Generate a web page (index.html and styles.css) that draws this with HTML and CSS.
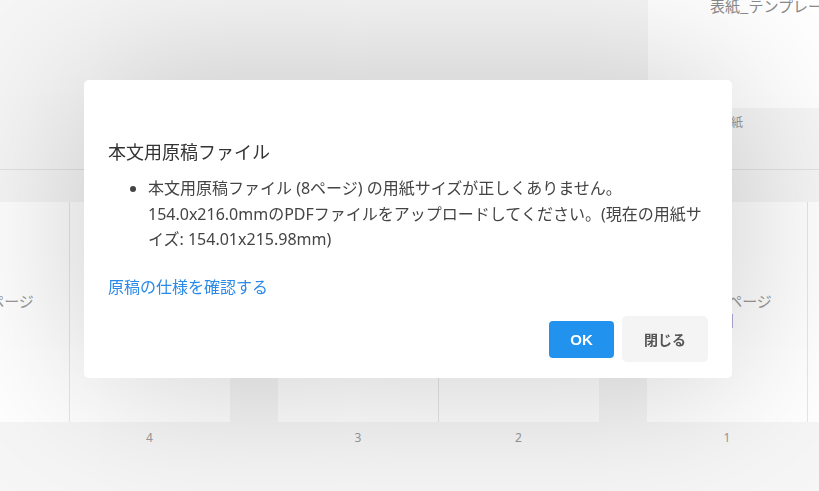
FILE: index.html
```html
<!DOCTYPE html>
<html lang="ja">
<head>
<meta charset="utf-8">
<title>原稿ファイル</title>
<link rel="stylesheet" href="styles.css">
</head>
<body>
<div class="page">
  <header class="top">
    <div class="cover">
      <div class="cover-thumb"><span class="cover-title">表紙_テンプレート.pdf</span></div>
      <div class="cover-label">表紙</div>
    </div>
  </header>
  <section class="spreads">
    <div class="spread">
      <div class="page-col">
        <div class="sheet"><span class="sheet-text">本文のページ</span><span class="sheet-mark"></span></div>
        <div class="num">5</div>
      </div>
      <div class="page-col">
        <div class="sheet sheet-right"><span class="sheet-text">本文のページ</span><span class="sheet-mark"></span></div>
        <div class="num">4</div>
      </div>
    </div>
    <div class="spread">
      <div class="page-col">
        <div class="sheet"><span class="sheet-text">本文のページ</span><span class="sheet-mark"></span></div>
        <div class="num">3</div>
      </div>
      <div class="page-col">
        <div class="sheet sheet-right"><span class="sheet-text">本文のページ</span><span class="sheet-mark"></span></div>
        <div class="num">2</div>
      </div>
    </div>
    <div class="spread">
      <div class="page-col">
        <div class="sheet"><span class="sheet-text">本文のページ</span><span class="sheet-mark"></span></div>
        <div class="num">1</div>
      </div>
      <div class="page-col">
        <div class="sheet sheet-right"></div>
        <div class="num">表紙裏</div>
      </div>
    </div>
  </section>
</div>

<div class="modal" role="dialog">
  <h2 class="modal-title">本文用原稿ファイル</h2>
  <ul class="modal-list">
    <li>本文用原稿ファイル (8ページ) の用紙サイズが正しくありません。154.0x216.0mmのPDFファイルをアップロードしてください。(現在の用紙サイズ: 154.01x215.98mm)</li>
  </ul>
  <a class="modal-link" href="#">原稿の仕様を確認する</a>
  <div class="modal-actions">
    <button class="btn btn-ok" type="button">OK</button>
    <button class="btn btn-close" type="button">閉じる</button>
  </div>
</div>
</body>
</html>
```

FILE: styles.css
```css
html, body {
  margin: 0;
  padding: 0;
}

body {
  width: 819px;
  height: 491px;
  overflow: hidden;
  background: #f6f6f6;
  font-family: "Noto Sans", "Noto Sans CJK JP", sans-serif;
  color: #444;
}

.page {
  width: 819px;
}

.top {
  height: 169px;
  border-bottom: 1px solid #e2e2e2;
  display: flex;
  justify-content: flex-end;
}

.cover {
  width: 171px;
  display: flex;
  flex-direction: column;
}

.cover-thumb {
  height: 108px;
  background: #ffffff;
  padding-left: 62px;
  white-space: nowrap;
  overflow: hidden;
}

.cover-title {
  display: block;
  font-size: 15px;
  line-height: 12px;
  color: #8a8a8a;
  font-family: "Noto Sans CJK JP", sans-serif;
}

.cover-label {
  margin-top: 5px;
  padding-left: 71px;
  font-size: 12px;
  line-height: 18px;
  color: #999;
  font-family: "Noto Sans CJK JP", sans-serif;
}

.spreads {
  margin-top: 32px;
  margin-left: -91px;
  display: flex;
  gap: 48px;
}

.spread {
  display: flex;
}

.page-col {
  display: flex;
  flex-direction: column;
  align-items: center;
}

.sheet {
  width: 160px;
  height: 220px;
  background: #ffffff;
  display: flex;
  flex-direction: column;
  align-items: center;
  justify-content: center;
  gap: 1px;
  padding-bottom: 8px;
  box-sizing: border-box;
}

.sheet-right {
  width: 161px;
  border-left: 1px solid #e6e6e6;
}

.sheet-text {
  font-family: "Noto Sans CJK JP", sans-serif;
  font-size: 15px;
  line-height: 24px;
  color: #9a9a9a;
  white-space: nowrap;
}

.sheet-mark {
  width: 12px;
  height: 14px;
  background: #b3abd9;
}

.num {
  margin-top: 7px;
  font-size: 12px;
  line-height: 18px;
  color: #999;
}

.modal {
  position: fixed;
  left: 84px;
  top: 80px;
  width: 648px;
  height: 298px;
  box-sizing: border-box;
  background: #ffffff;
  border-radius: 5px;
  padding: 58px 24px 16px;
  box-shadow: 0 0 160px rgba(0, 0, 0, 0.23);
  display: flex;
  flex-direction: column;
}

.modal-title {
  margin: 0;
  font-size: 18px;
  line-height: 27px;
  font-weight: 400;
  color: #333;
  font-family: "Noto Sans CJK JP", sans-serif;
}

.modal-list {
  margin: 11px 0 0;
  padding-left: 40px;
  font-size: 16px;
  line-height: 25.5px;
  color: #444;
}

.modal-link {
  align-self: flex-start;
  margin-top: 21px;
  font-size: 16px;
  line-height: 24px;
  color: #2b8ae8;
  text-decoration: none;
  font-family: "Noto Sans CJK JP", sans-serif;
}

.modal-actions {
  margin-top: auto;
  display: flex;
  justify-content: flex-end;
  align-items: center;
  gap: 8px;
}

.btn {
  border: none;
  padding: 0;
  font-weight: 700;
  font-family: "Liberation Sans", "Noto Sans CJK JP", sans-serif;
  cursor: pointer;
}

.btn-ok {
  width: 65px;
  height: 37px;
  background: #2192ee;
  color: #ffffff;
  font-size: 15px;
  border-radius: 4px;
}

.btn-close {
  width: 86px;
  height: 46px;
  background: #f4f4f4;
  color: #555;
  font-size: 14px;
  border-radius: 5px;
  font-family: "Noto Sans CJK JP", sans-serif;
}
```
